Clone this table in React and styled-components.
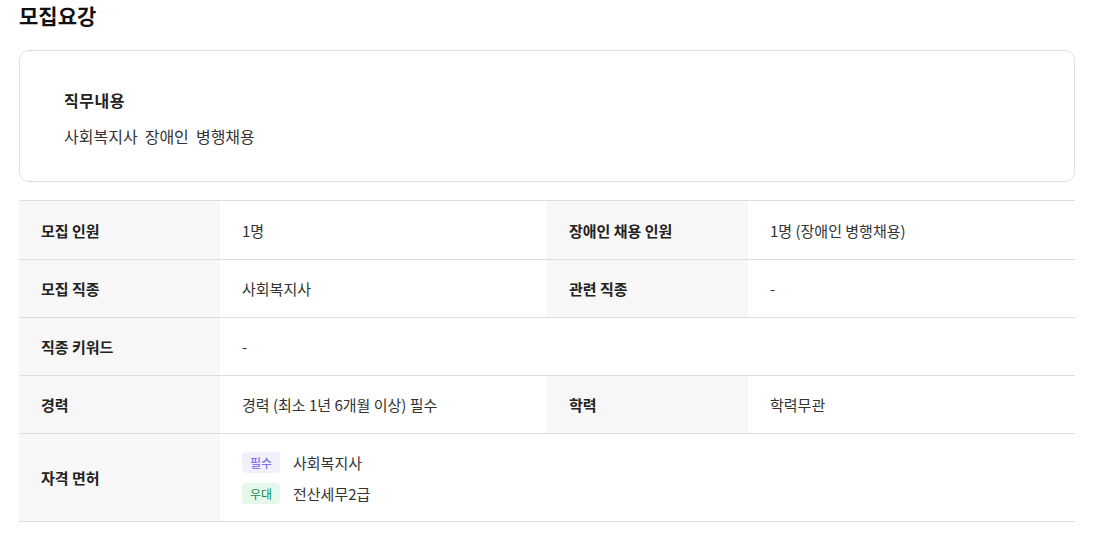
import React from 'react';
import styled, { createGlobalStyle } from 'styled-components';

const GlobalStyle = createGlobalStyle`
  body {
    margin: 0;
    background: #fff;
    font-family: "Noto Sans CJK KR", "Noto Sans", sans-serif;
    color: #222;
  }
`;

const Section = styled.section`
  width: 1056px;
  padding: 0 0 0 19px;
`;

const Title = styled.h2`
  margin: 0;
  font-size: 21px;
  line-height: 30px;
  font-weight: 700;
  color: #111;
`;

const Card = styled.div`
  margin-top: 20px;
  height: 132px;
  box-sizing: border-box;
  border: 1px solid #dedede;
  border-radius: 10px;
  padding: 38px 44px 0;
`;

const CardTitle = styled.div`
  font-size: 16px;
  line-height: 22px;
  font-weight: 700;
  letter-spacing: 0.5px;
  color: #222;
`;

const CardText = styled.div`
  margin-top: 14px;
  font-size: 16px;
  line-height: 22px;
  word-spacing: 3.5px;
  color: #333;
`;

const Table = styled.div`
  margin-top: 18px;
  display: grid;
  grid-template-columns: 201px 327px 201px 327px;
  border-top: 1px solid #dedede;
`;

const Row = styled.div`
  display: contents;
`;

const Label = styled.div`
  display: flex;
  align-items: center;
  min-height: ${p => (p.$first ? '58px' : '57px')};
  padding: 0 22px;
  background: #f7f7f7;
  border-bottom: 1px solid #dedede;
  font-size: 15px;
  font-weight: 700;
  color: #222;
`;

const Value = styled.div`
  display: flex;
  align-items: center;
  min-height: 57px;
  padding: 0 22px;
  border-bottom: 1px solid #dedede;
  font-size: 15px;
  color: #333;
  grid-column: ${p => (p.$wide ? 'span 3' : 'auto')};
`;

const LicenseList = styled.div`
  display: flex;
  flex-direction: column;
  gap: 10px;
  padding: 18px 0 17px;
`;

const License = styled.div`
  display: flex;
  align-items: center;
  gap: 13px;
  font-size: 15px;
  line-height: 21px;
  color: #333;
`;

const Badge = styled.span`
  display: inline-flex;
  align-items: center;
  justify-content: center;
  width: 38px;
  height: 21px;
  border-radius: 4px;
  font-size: 12px;
  background: ${p => (p.$tone === 'green' ? '#e5f8ec' : '#f0f0ff')};
  color: ${p => (p.$tone === 'green' ? '#168a48' : '#6b5cf0')};
`;

const rows = [
  [['모집 인원', '1명'], ['장애인 채용 인원', '1명 (장애인 병행채용)']],
  [['모집 직종', '사회복지사'], ['관련 직종', '-']],
  [['직종 키워드', '-']],
  [['경력', '경력 (최소 1년 6개월 이상) 필수'], ['학력', '학력무관']],
];

export default function App() {
  return (
    <>
      <GlobalStyle />
      <Section>
        <Title>모집요강</Title>
        <Card>
          <CardTitle>직무내용</CardTitle>
          <CardText>사회복지사 장애인 병행채용</CardText>
        </Card>
        <Table>
          {rows.map((row, i) => (
            <Row key={i}>
              {row.map(([label, value]) => (
                <React.Fragment key={label}>
                  <Label $first={i === 0}>{label}</Label>
                  <Value $wide={row.length === 1}>{value}</Value>
                </React.Fragment>
              ))}
            </Row>
          ))}
          <Row>
            <Label>자격 면허</Label>
            <Value $wide>
              <LicenseList>
                <License>
                  <Badge>필수</Badge>
                  사회복지사
                </License>
                <License>
                  <Badge $tone="green">우대</Badge>
                  전산세무2급
                </License>
              </LicenseList>
            </Value>
          </Row>
        </Table>
      </Section>
    </>
  );
}
